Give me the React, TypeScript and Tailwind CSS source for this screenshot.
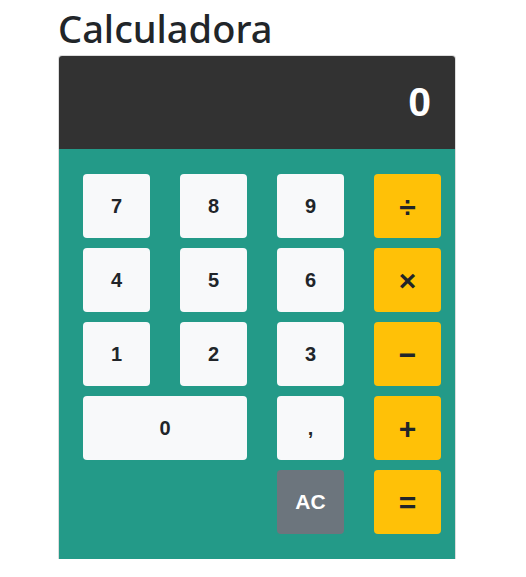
const numKey =
  "flex items-center justify-center rounded bg-[#f8f9fa] text-[20px] font-bold text-[#212529]";
const opKey =
  "flex items-center justify-center rounded bg-[#ffc107] text-[30px] font-bold text-[#212529]";

export default function App() {
  return (
    <div className="min-h-[577px] w-[526px] bg-white font-['Liberation_Sans',Arial,sans-serif]">
      <div className="ml-[58px] w-[398px]">
        <h1 className="pt-[1px] font-['Noto_Sans',sans-serif] text-[38px] font-medium leading-[54px] text-[#212529]">
          Calculadora
        </h1>
        <div className="overflow-hidden rounded-t border border-b-0 border-[#dcdcdc]">
          <div className="flex h-[93px] items-center justify-end bg-[#323232] pr-[24px] text-[41px] font-bold text-white">
            0
          </div>
          <div className="grid grid-cols-[67px_67px_67px_67px] grid-rows-[64px_64px_64px_64px_64px] gap-x-[30px] gap-y-[10px] bg-[#239a88] px-[24px] py-[25px]">
            <button className={numKey}>7</button>
            <button className={numKey}>8</button>
            <button className={numKey}>9</button>
            <button className={opKey}>÷</button>
            <button className={numKey}>4</button>
            <button className={numKey}>5</button>
            <button className={numKey}>6</button>
            <button className={opKey}>×</button>
            <button className={numKey}>1</button>
            <button className={numKey}>2</button>
            <button className={numKey}>3</button>
            <button className={opKey}>−</button>
            <button className={`${numKey} col-span-2`}>0</button>
            <button className={numKey}>,</button>
            <button className={opKey}>+</button>
            <button className="col-start-3 flex items-center justify-center rounded bg-[#6c757d] text-[21px] font-bold text-white">
              AC
            </button>
            <button className={opKey}>=</button>
          </div>
        </div>
      </div>
    </div>
  );
}
